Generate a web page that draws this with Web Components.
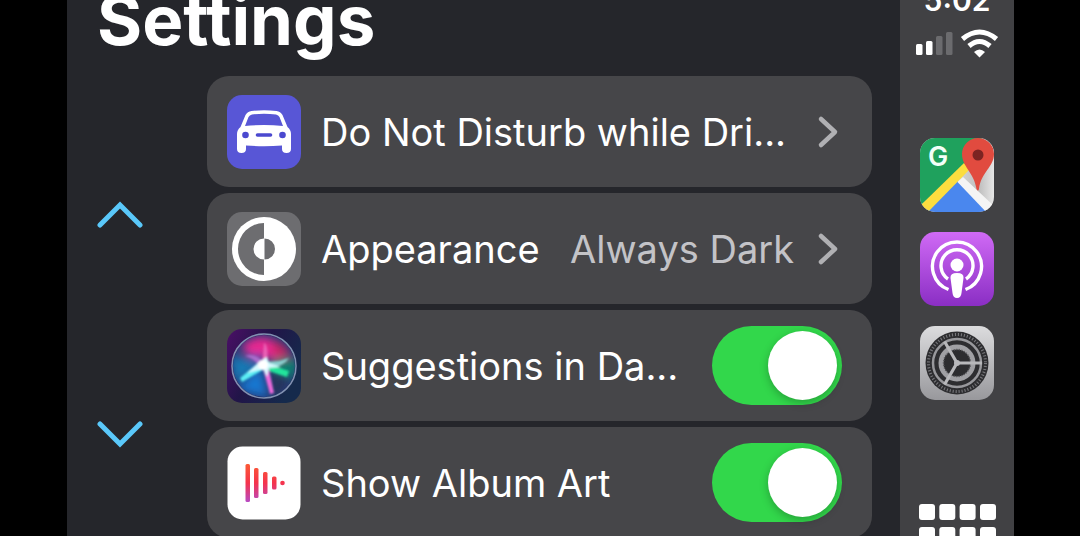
<!DOCTYPE html>
<html lang="en">
<head>
<meta charset="utf-8">
<meta name="viewport" content="width=device-width, initial-scale=1">
<title>Settings</title>
<style>
  html, body { height: 100%; }
  body {
    margin: 0;
    background: #000;
    color: #fff;
    font-family: Inter, "Liberation Sans", sans-serif;
    overflow: hidden;
  }
</style>
</head>
<body>
<car-display>
  <settings-panel heading="Settings">
    <setting-row label="Do Not Disturb while Dri...">
      <app-icon slot="icon" name="car"></app-icon>
    </setting-row>
    <setting-row label="Appearance" value="Always Dark">
      <app-icon slot="icon" name="appearance"></app-icon>
    </setting-row>
    <setting-row label="Suggestions in Da..." type="toggle">
      <app-icon slot="icon" name="siri"></app-icon>
    </setting-row>
    <setting-row label="Show Album Art" type="toggle">
      <app-icon slot="icon" name="playing"></app-icon>
    </setting-row>
  </settings-panel>
  <car-dock slot="dock" time="5:02">
    <app-icon name="maps" label="Google Maps"></app-icon>
    <app-icon name="podcasts" label="Podcasts"></app-icon>
    <app-icon name="settings" label="Settings"></app-icon>
  </car-dock>
</car-display>

<script>
// Icon artwork, all on a 74x74 canvas
const ICONS = {
  car: `
    <rect width="74" height="74" rx="15" fill="#5856d6"/>
    <path fill="#fff" fill-rule="evenodd" d="M24.500 16Q37 14.500 49.500 16Q53.500 16.500 55.500 20L60.500 32Q64 35 64 39V54Q64 58 59.500 58Q55 58 55 54V50.500Q37 52 19 50.500V54Q19 58 14.500 58Q10 58 10 54V39Q10 35 13.500 32L18.500 20Q20.500 16.500 24.500 16ZM25 19.500Q22.500 20 21.500 22L18 31Q37 29 56 31L52.500 22Q51.500 20 49 19.500Q37 18 25 19.500Z"/>
    <circle cx="18.500" cy="40" r="3.300" fill="#4b49cf"/>
    <circle cx="55.500" cy="40" r="3.300" fill="#4b49cf"/>
    <path d="M30.500 40H43.500" stroke="#4b49cf" stroke-width="3.600" stroke-linecap="round"/>`,
  appearance: `
    <rect width="74" height="74" rx="15" fill="#6d6d70"/>
    <circle cx="37" cy="37" r="32" fill="#fff"/>
    <path d="M37 11A26 26 0 0 0 37 63V47.500A10.500 10.500 0 0 1 37 26.500Z" fill="#6d6d70"/>
    <path d="M37.500 26.500A10.500 10.500 0 0 1 37.500 47.500Z" fill="#6d6d70"/>`,
  siri: `
    <defs>
      <linearGradient id="bg" x1="0" y1="0" x2="1" y2=".5">
        <stop offset="0" stop-color="#4b0f66"/><stop offset=".5" stop-color="#211548"/><stop offset="1" stop-color="#152a4c"/>
      </linearGradient>
      <clipPath id="orb"><circle cx="37" cy="37" r="31"/></clipPath>
      <filter id="soft" x="-50%" y="-50%" width="200%" height="200%"><feGaussianBlur stdDeviation="4"/></filter>
      <filter id="ray" x="-50%" y="-50%" width="200%" height="200%"><feGaussianBlur stdDeviation="1"/></filter>
    </defs>
    <rect width="74" height="74" rx="15" fill="url(#bg)"/>
    <g clip-path="url(#orb)">
      <rect width="74" height="74" fill="#263a78"/>
      <g filter="url(#soft)">
        <path d="M14 18Q36 -4 62 24L50 32L37 28L20 24Z" fill="#e8268f"/>
        <path d="M44 10Q60 14 64 28L48 28Z" fill="#c32564"/>
        <path d="M4 26L34 36L8 54Z" fill="#157ab5"/>
        <path d="M34 38L40 68L10 60Z" fill="#1878d2"/>
        <path d="M48 30L70 30L68 50L44 40Z" fill="#087f70"/>
        <path d="M42 42L62 48L54 66L42 66Z" fill="#28345c"/>
        <path d="M16 26L34 34L36 24Z" fill="#7f48bb"/>
      </g>
      <g filter="url(#ray)">
        <path d="M34 32L13 49L15 53L39 39Z" fill="#5ceef4"/>
        <path d="M38 34L62 42L60 48L36 40Z" fill="#22e39b"/>
        <path d="M35 36L43 65L47 64L41 36Z" fill="#ed69db"/>
        <path d="M35 36L37 14Q42 16 40 36Z" fill="#e960b5"/>
        <path d="M18 27Q29 23 38 35L34 39Q26 28 18 27Z" fill="#a96dcc"/>
        <path d="M38 32Q50 34 62 29Q56 39 40 38Z" fill="#8acfcf"/>
        <path d="M20 44L32 33L36 30L40 28L42 34L54 38L42 39L40 48L36 40Z" fill="#d5faff"/>
        <circle cx="36" cy="36" r="5" fill="#fff"/>
      </g>
    </g>
    <circle cx="37" cy="37" r="32" fill="none" stroke="#8292b3" stroke-width="1.500"/>`,
  playing: `
    <defs>
      <linearGradient id="bars" gradientUnits="userSpaceOnUse" x1="0" y1="18" x2="0" y2="56">
        <stop offset="0" stop-color="#fb5a35"/><stop offset=".5" stop-color="#f5334c"/><stop offset="1" stop-color="#b74bc4"/>
      </linearGradient>
    </defs>
    <rect x=".5" y=".5" width="73" height="73" rx="15" fill="#fff"/>
    <g fill="url(#bars)">
      <rect x="18.500" y="18" width="4.500" height="38" rx="1.500"/>
      <rect x="27" y="22" width="4.500" height="30" rx="1.500"/>
      <rect x="36" y="26" width="4.500" height="22" rx="1.500"/>
      <rect x="45" y="30.500" width="4.500" height="13" rx="1.500"/>
      <circle cx="55.500" cy="37" r="2.300"/>
    </g>`,
  maps: `
    <defs>
      <clipPath id="tile"><rect width="74" height="74" rx="15"/></clipPath>
      <linearGradient id="fold" x1="0" y1="0" x2="1" y2="0">
        <stop offset=".5" stop-color="#d6d6d6"/><stop offset=".8" stop-color="#bfbfbf"/><stop offset="1" stop-color="#e6e6e6"/>
      </linearGradient>
    </defs>
    <g clip-path="url(#tile)">
      <rect width="74" height="74" fill="url(#fold)"/>
      <path d="M0 0H62L46 26L0 68Z" fill="#1fa15d"/>
      <path d="M3 74L37.500 43L68 74Z" fill="#4a87ee"/>
      <path d="M2 66L44 25L50 31L8 74L0 70Z" fill="#fcdd3f"/>
      <path d="M37.500 44L43 39L74 68L68 76Z" fill="#f4f4f4"/>
      <path d="M58 0A16 16 0 0 0 42 16C42 29 54 34 56.500 51Q58 54 59 51C61 34 74 29 74 16A16 16 0 0 0 58 0Z" fill="#e14b3f"/>
      <circle cx="58" cy="17" r="5.500" fill="#7b2422"/>
      <text x="8" y="28" font-family="Inter, sans-serif" font-size="27" font-weight="600" fill="#f2fff8">G</text>
    </g>`,
  podcasts: `
    <defs>
      <linearGradient id="pod" x1="0" y1="0" x2="0" y2="1">
        <stop offset="0" stop-color="#d06af5"/><stop offset="1" stop-color="#8a2ec4"/>
      </linearGradient>
    </defs>
    <rect width="74" height="74" rx="15" fill="url(#pod)"/>
    <g fill="none" stroke="#fff" stroke-width="3.400">
      <path d="M28.500 57.500A24.500 24.500 0 1 1 45.500 57.500"/>
      <path d="M28 47A16 16 0 1 1 46 47"/>
    </g>
    <circle cx="37" cy="33" r="6.500" fill="#fff"/>
    <path d="M37 41Q44 41 43.500 46L41.500 61Q41 66 37 66Q33 66 32.500 61L30.500 46Q30 41 37 41Z" fill="#fff"/>`,
  settings: `
    <defs>
      <linearGradient id="metal" x1="0" y1="0" x2="0" y2="1">
        <stop offset="0" stop-color="#dcdcde"/><stop offset="1" stop-color="#98989c"/>
      </linearGradient>
    </defs>
    <rect width="74" height="74" rx="15" fill="url(#metal)"/>
    <g fill="none">
      <circle cx="37" cy="37" r="31.500" fill="#2d2d30"/>
      <circle cx="37" cy="37" r="28.500" stroke="#77777b" stroke-width="3" stroke-dasharray="1.100 1.900"/>
      <circle cx="37" cy="37" r="24" stroke="#98989c" stroke-width="2.500"/>
      <circle cx="37" cy="37" r="16" stroke="#a0a0a4" stroke-width="5"/>
      <circle cx="37" cy="37" r="13.500" stroke="#5c5c60" stroke-width="1.500" stroke-dasharray="1.200 1.400"/>
      <path d="M37 37H62M37 37L24.500 15.500M37 37L24.500 58.500" stroke="#b8b8bb" stroke-width="3.200"/>
      <circle cx="37" cy="37" r="3" fill="#b8b8bb"/>
    </g>`
};

// 1. AppIcon
class AppIcon extends HTMLElement {
  constructor() {
    super();
    this.attachShadow({ mode: 'open' });
  }

  connectedCallback() {
    const art = ICONS[this.getAttribute('name')] || '';
    const label = this.getAttribute('label') || '';
    const svg = `<svg viewBox="0 0 74 74" aria-hidden="true">${art}</svg>`;

    // Icons with a label launch an app, the others are decoration
    this.shadowRoot.innerHTML = `
      <style>
        :host { display: block; flex: none; width: 74px; height: 74px; }
        svg { display: block; width: 100%; height: 100%; }
        button { display: block; width: 100%; height: 100%; margin: 0; padding: 0; border: 0; background: none; }
      </style>
      ${label ? `<button type="button" aria-label="${label}">${svg}</button>` : svg}
    `;
  }
}
customElements.define('app-icon', AppIcon);

// 2. SettingRow, either a link or a switch
class SettingRow extends HTMLElement {
  constructor() {
    super();
    this.attachShadow({ mode: 'open' });
  }

  connectedCallback() {
    const label = this.getAttribute('label') || '';
    const value = this.getAttribute('value') || '';
    const toggle = this.getAttribute('type') === 'toggle';

    this.shadowRoot.innerHTML = `
      <style>
        :host { display: block; }
        .row {
          display: flex;
          align-items: center;
          gap: 20px;
          box-sizing: border-box;
          height: 111px;
          padding: 0 30px 0 20px;
          border-radius: 22px;
          background: #464649;
          color: #fff;
          font-size: 38px;
          line-height: 48px;
          text-decoration: none;
          white-space: nowrap;
        }
        .label { flex: 1; min-width: 0; }
        .value { color: #c3c3c7; }
        .chevron { flex: none; width: 28px; height: 36px; }
        input {
          appearance: none;
          flex: none;
          display: flex;
          justify-content: flex-end;
          box-sizing: border-box;
          width: 130px;
          height: 79px;
          margin: 0;
          padding: 5px;
          border-radius: 40px;
          background: #69696e;
        }
        input:checked { background: #32d74b; }
        input::before {
          content: "";
          width: 69px;
          height: 69px;
          border-radius: 50%;
          background: #fff;
          box-shadow: 0 3px 8px rgba(0, 0, 0, 0.25);
        }
        input:not(:checked) { justify-content: flex-start; }
      </style>
      ${toggle
        ? `<label class="row">
             <slot name="icon"></slot>
             <span class="label">${label}</span>
             <input type="checkbox" role="switch" checked>
           </label>`
        : `<a class="row" href="#">
             <slot name="icon"></slot>
             <span class="label">${label}</span>
             ${value ? `<span class="value">${value}</span>` : ''}
             <svg class="chevron" viewBox="0 0 28 36" aria-hidden="true">
               <path d="M7 5L21 18L7 31" fill="none" stroke="#b0b0b3" stroke-width="4.500" stroke-linecap="round" stroke-linejoin="round"/>
             </svg>
           </a>`
      }
    `;
  }
}
customElements.define('setting-row', SettingRow);

// 3. SettingsPanel
class SettingsPanel extends HTMLElement {
  constructor() {
    super();
    this.attachShadow({ mode: 'open' });
  }

  connectedCallback() {
    const heading = this.getAttribute('heading') || '';

    this.shadowRoot.innerHTML = `
      <style>
        :host {
          display: flex;
          flex-direction: column;
          flex: 1;
          min-width: 0;
          background: #25262b;
        }
        h1 {
          margin: 0;
          padding: 0 30px 36px;
          font-size: 69px;
          font-weight: 700;
          line-height: 40px;
        }
        .body {
          display: grid;
          grid-template-columns: 140px 1fr;
          flex: 1;
          min-height: 0;
          padding-right: 28px;
        }
        .pager {
          display: flex;
          flex-direction: column;
          align-items: flex-start;
          justify-content: center;
          gap: 172px;
          padding: 36px 0 0 30px;
        }
        .pager button { margin: 0; padding: 0; border: 0; background: none; }
        .pager svg { display: block; width: 46px; height: 46px; }
        .list { display: flex; flex-direction: column; gap: 6px; }
      </style>
      <h1>${heading}</h1>
      <div class="body">
        <div class="pager">
          <button type="button" aria-label="Scroll up">
            <svg viewBox="0 0 46 46"><path d="M3 32L23 12L43 32" fill="none" stroke="#5ac8fa" stroke-width="5" stroke-linecap="round"/></svg>
          </button>
          <button type="button" aria-label="Scroll down">
            <svg viewBox="0 0 46 46"><path d="M3 13L23 33L43 13" fill="none" stroke="#5ac8fa" stroke-width="5" stroke-linecap="round"/></svg>
          </button>
        </div>
        <div class="list"><slot></slot></div>
      </div>
    `;
  }
}
customElements.define('settings-panel', SettingsPanel);

// 4. CarDock
class CarDock extends HTMLElement {
  constructor() {
    super();
    this.attachShadow({ mode: 'open' });
  }

  connectedCallback() {
    const time = this.getAttribute('time') || '';

    this.shadowRoot.innerHTML = `
      <style>
        :host {
          display: flex;
          flex-direction: column;
          align-items: center;
          flex: none;
          width: 114px;
          background: #414144;
        }
        /* the clock is half scrolled off the top edge */
        time {
          margin-top: -18px;
          font-size: 30px;
          font-weight: 600;
          line-height: 36px;
        }
        .status { display: block; flex: none; width: 84px; height: 30px; margin-top: 10px; }
        .apps { display: flex; flex-direction: column; gap: 20px; padding-top: 80px; }
        .home { flex: none; margin: 104px 0 0; padding: 0; border: 0; background: none; }
        .home svg { display: block; width: 77px; height: 62px; }
      </style>
      <time>${time}</time>
      <svg class="status" viewBox="0 0 84 30" role="img" aria-label="Two bars, Wi-Fi connected">
        <g fill="#fff">
          <rect x="1" y="16" width="6.500" height="11" rx="1.500"/>
          <rect x="11" y="13" width="6.500" height="14" rx="1.500"/>
          <rect x="21" y="8" width="6.500" height="19" rx="1.500" fill="#6b6b6e"/>
          <rect x="31" y="4" width="6.500" height="23" rx="1.500" fill="#6b6b6e"/>
        </g>
        <g fill="none" stroke="#fff" stroke-width="5">
          <path d="M47.500 11Q64.500 -3 81.500 11"/>
          <path d="M54 18Q64.500 9 75 18"/>
        </g>
        <path d="M59 24Q64.500 19 70 24L64.500 29.500Z" fill="#fff"/>
      </svg>
      <div class="apps"><slot></slot></div>
      <button class="home" type="button" aria-label="Home">
        <svg viewBox="0 0 77 62" fill="#fff">
          ${[0, 23, 46].map(y => [0, 20.3, 40.6, 61].map(x => `<rect x="${x}" y="${y}" width="16" height="16" rx="3"/>`).join('')).join('')}
        </svg>
      </button>
    `;
  }
}
customElements.define('car-dock', CarDock);

// 5. CarDisplay
class CarDisplay extends HTMLElement {
  constructor() {
    super();
    this.attachShadow({ mode: 'open' });
    this.shadowRoot.innerHTML = `
      <style>
        :host {
          display: flex;
          box-sizing: border-box;
          height: 100%;
          padding: 0 66px 0 67px;
          overflow: hidden;
        }
      </style>
      <slot></slot>
      <slot name="dock"></slot>
    `;
  }
}
customElements.define('car-display', CarDisplay);
</script>
</body>
</html>
